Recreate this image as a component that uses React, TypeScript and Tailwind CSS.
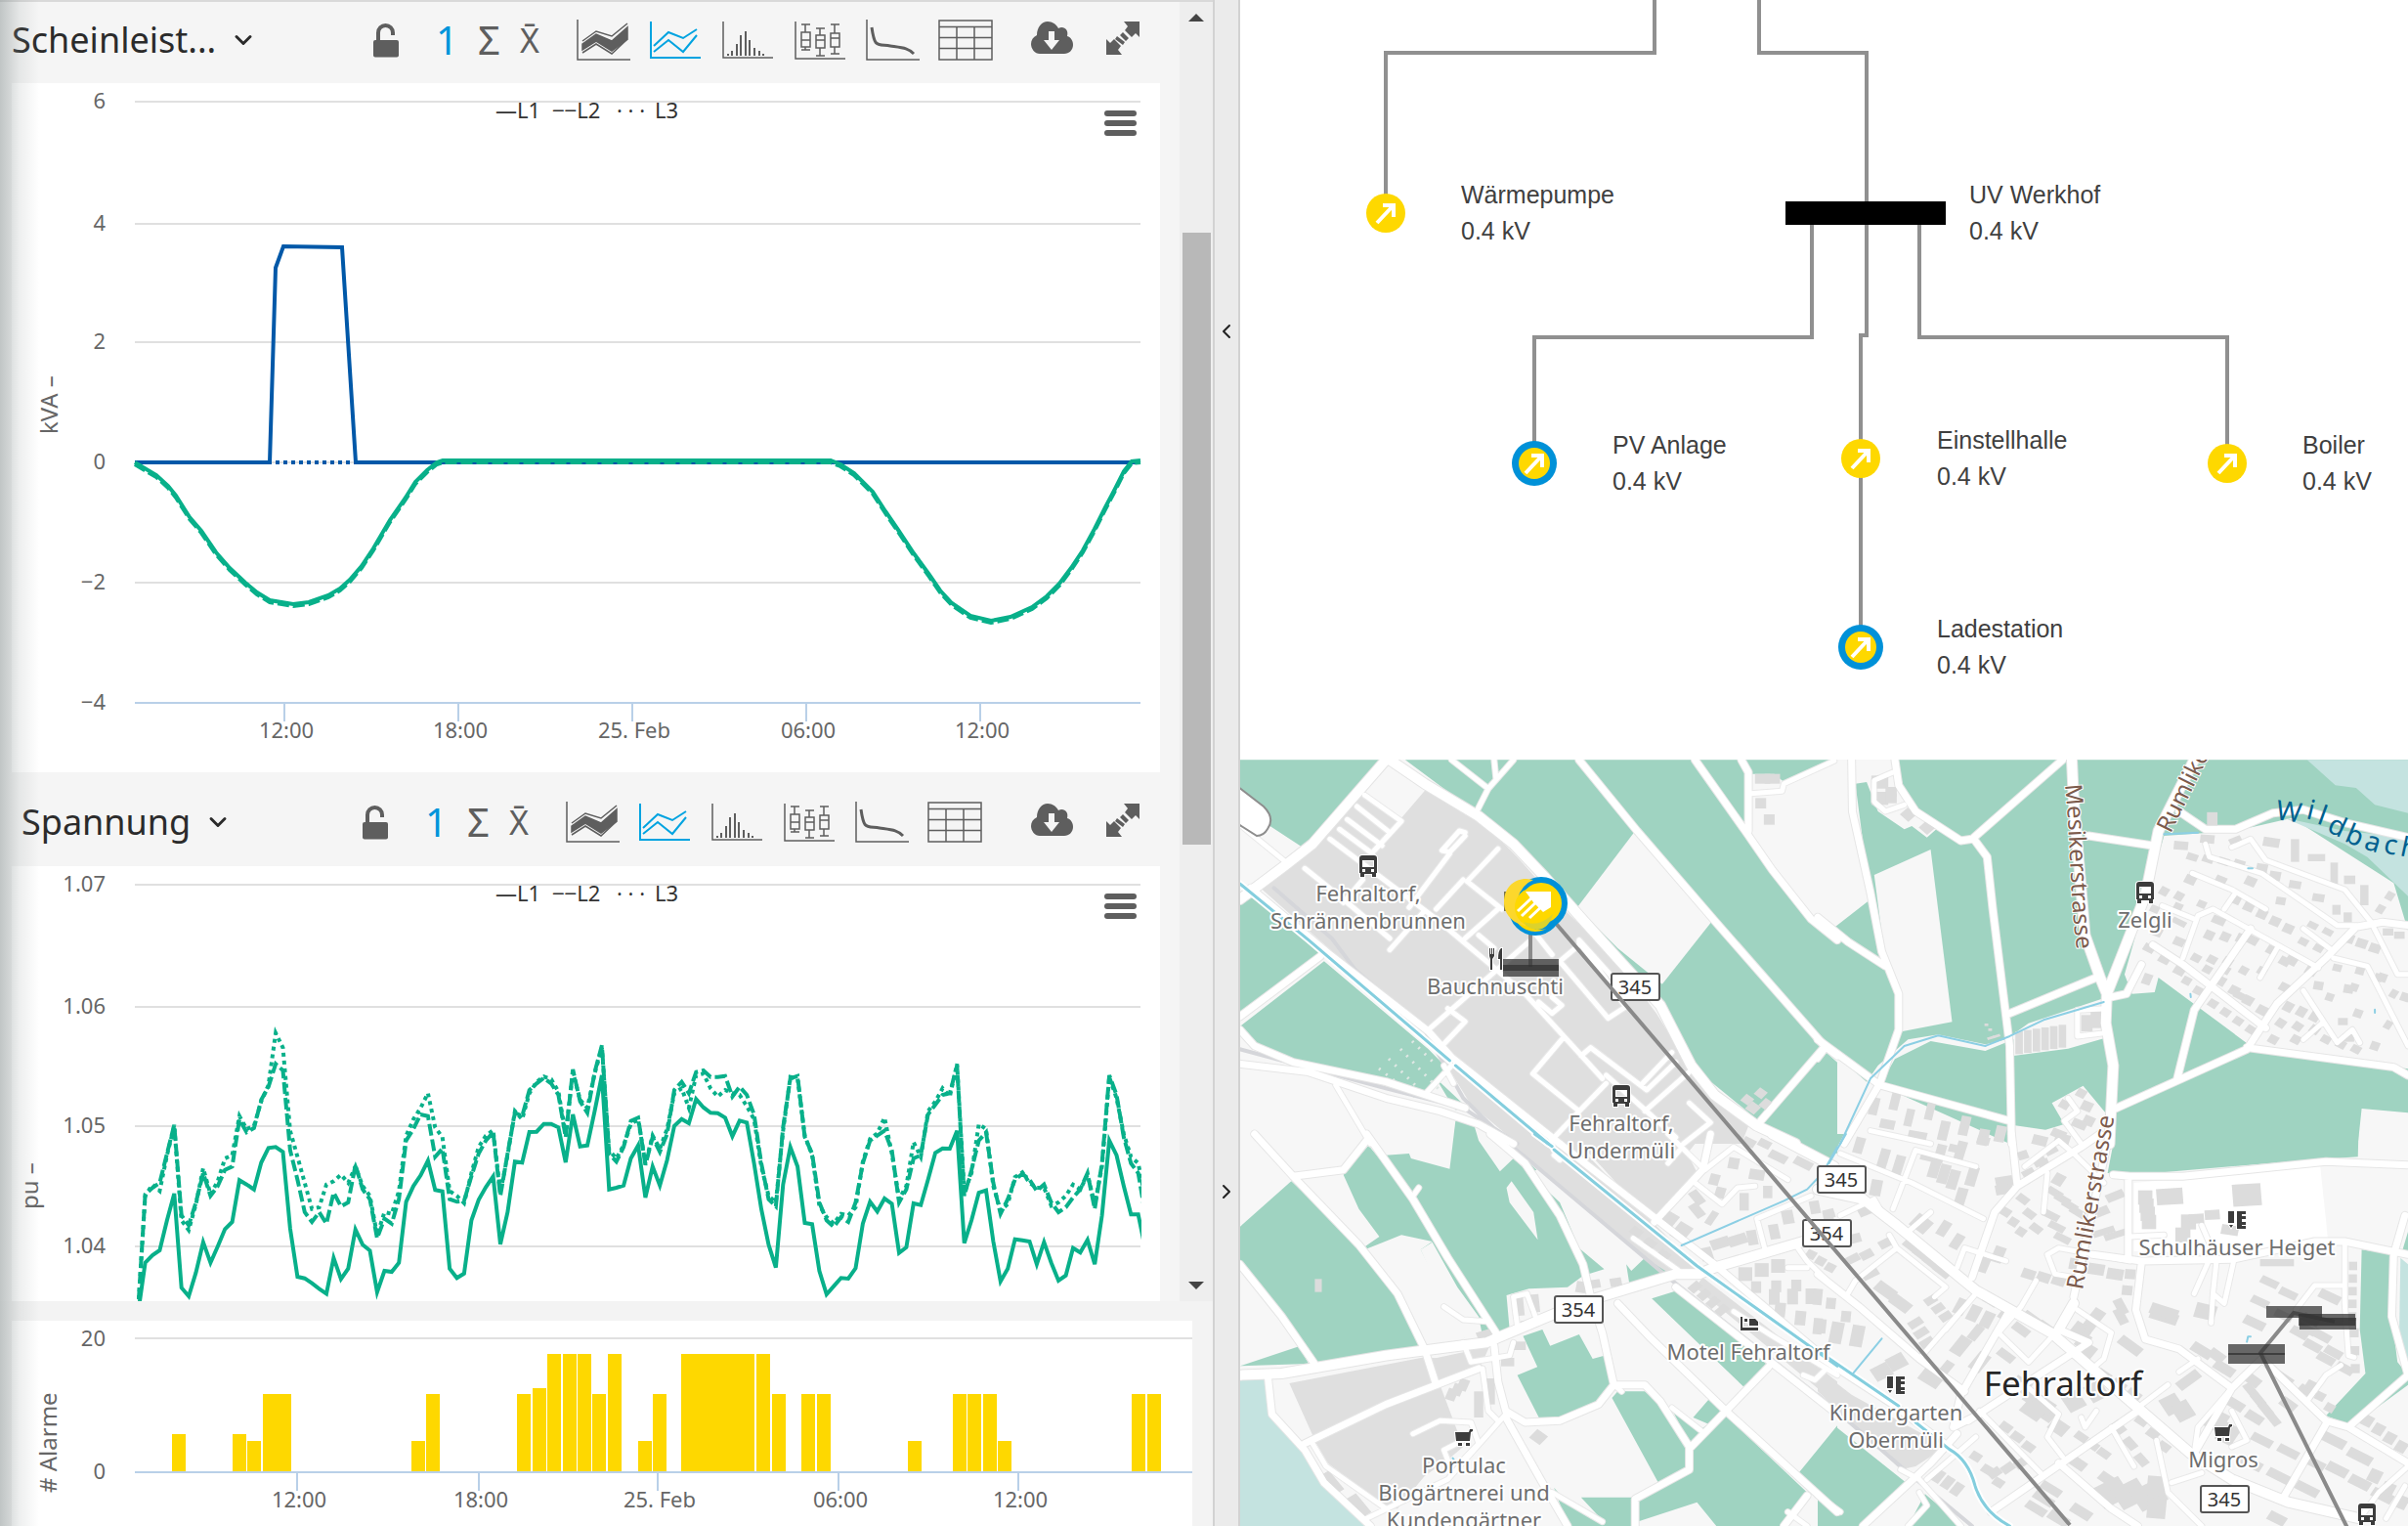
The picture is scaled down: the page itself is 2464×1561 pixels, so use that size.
import type { ReactNode } from 'react';
import { ChevronDown, ChevronLeft, ChevronRight } from 'lucide-react';
import { clsx } from 'clsx';

const GREEN = '#08b08a';
const BLUE = '#0058a8';

const chartText = "font-['Noto_Sans',sans-serif] text-[22px]";
const axisTitle = "font-['Noto_Sans',sans-serif] text-[24px]";

/* ---------- toolbar icons ---------- */

function ChartIcon({ children, active }: { children: ReactNode; active?: boolean }) {
  return (
    <svg
      viewBox="0 0 56 42"
      className={clsx('h-[42px] w-[56px]', active ? 'text-[#00a3e0]' : 'text-[#5e5e5e]')}
      fill="none"
      stroke="currentColor"
      strokeWidth="1.5"
    >
      {children}
    </svg>
  );
}

const histogram = [
  [6, 35], [10, 32], [15, 25], [19, 16], [24, 12], [28, 21], [33, 29], [38, 32], [42, 35],
];

const boxes = [
  { x: 7, top: 13, bottom: 28, median: 21, min: 31, max: 5 },
  { x: 22, top: 16, bottom: 29, median: 21, min: 37, max: 9 },
  { x: 37, top: 14, bottom: 28, median: 19, min: 35, max: 5 },
];

const chartTypes = [
  {
    name: 'Band',
    icon: (
      <ChartIcon>
        <path d="M1 0V41H55" />
        <path d="M6 25L20 15L36 22L52 8V20L36 32L20 22L6 31Z" fill="currentColor" />
        <path d="M6 22L20 12L36 17L52 4M6 34L20 25L36 35L52 20" />
      </ChartIcon>
    ),
  },
  {
    name: 'Linie',
    icon: (
      <ChartIcon active>
        <path d="M2 2V39H53M5 27L20 13L35 19L49 10M5 33L20 21L35 33L49 16" strokeWidth="2" />
      </ChartIcon>
    ),
  },
  {
    name: 'Histogramm',
    icon: (
      <ChartIcon>
        <path d="M2 2V39H53" />
        {histogram.map(([x, y]) => <path key={x} d={`M${x + 1} ${y}V37`} strokeWidth="2" />)}
      </ChartIcon>
    ),
  },
  {
    name: 'Boxplot',
    icon: (
      <ChartIcon>
        <path d="M2 2V40H53" />
        {boxes.map((b) => (
          <path
            key={b.x}
            d={`M${b.x + 1} ${b.top}h9V${b.bottom}h-9ZM${b.x + 1} ${b.median}h9M${b.x + 5} ${b.top}V${b.max}m-4 0h9M${b.x + 5} ${b.bottom}V${b.min}m-4 0h9`}
          />
        ))}
      </ChartIcon>
    ),
  },
  {
    name: 'Dauerlinie',
    icon: (
      <ChartIcon>
        <path d="M1 0V41H55" />
        <path d="M6 8C9 29 11 25 25 27S43 29 49 35" strokeWidth="3" />
      </ChartIcon>
    ),
  },
  {
    name: 'Tabelle',
    icon: (
      <ChartIcon>
        <path d="M1 1H55V41H1ZM1 7.5H55M1 18.5H55M1 29.5H55M19 7V41M37 7V41" />
      </ChartIcon>
    ),
  },
];

function LockIcon() {
  return (
    <svg viewBox="0 0 26 36" className="h-9 w-[26px]">
      <path d="M5 19V10.500a7.500 7.500 0 0 1 15 0V13" fill="none" stroke="#5e5e5e" strokeWidth="4" />
      <rect x="0" y="18" width="26" height="17.500" rx="2" fill="#5e5e5e" />
    </svg>
  );
}

function CloudIcon() {
  return (
    <svg viewBox="0 0 44 34" className="h-[34px] w-11">
      <path
        d="M9 33C4 33 0 28 0 23C0 19 2 16 6 14C6 6 11 0 17 0C22 0 26 3 28 7C33 4 39 8 37 15C41 16 43 20 43 24C43 29 39 33 34 33Z"
        fill="#5e5e5e"
      />
      <path d="M18 10h6v9h5l-8 10l-8-10h5Z" fill="#f5f5f5" />
    </svg>
  );
}

function ExpandIcon() {
  return (
    <svg viewBox="0 0 36 36" className="h-9 w-9" fill="#5e5e5e">
      <path d="M19 1H35V17L31 13L27 17L20 10L23 6Z" />
      <path d="M1 19L5 23L9 19L16 26L13 30L17 35H1Z" />
      <path d="M18 12L24 18L21 21L15 15ZM12 16L20 22L18 25L10 19Z" />
    </svg>
  );
}

interface ToolbarProps {
  title: string;
  id: string;
  className: string;
  titleClassName: string;
}

function Toolbar({ title, id, className, titleClassName }: ToolbarProps) {
  return (
    <header className={clsx("flex items-center bg-[#f5f5f5] pr-10 pb-[6px] font-['Noto_Sans',sans-serif]", className)}>
      <div className={clsx('flex shrink-0 items-center gap-3', titleClassName)}>
        <label htmlFor={id} className="sr-only">Messgrösse</label>
        <select
          id={id}
          defaultValue={title}
          className="appearance-none field-sizing-content bg-transparent pr-[2px] text-[36px] leading-[54px] text-[#2b2b2b]"
        >
          <option>{title}</option>
        </select>
        <ChevronDown className="h-7 w-7 text-[#2b2b2b]" strokeWidth={2.500} />
      </div>
      <button aria-label="Sperren"><LockIcon /></button>
      <div className="ml-7 flex items-center text-[#5e5e5e]">
        <button className="w-[43px] text-[40px] leading-[44px] text-[#0095db]">1</button>
        <button className="w-[43px] text-[40px] leading-[44px]">Σ</button>
        <button className="w-[40px] text-[34px] leading-[44px]">X̄</button>
      </div>
      <div className="ml-7 flex items-center gap-[18px]">
        {chartTypes.map((type) => (
          <button key={type.name} aria-label={type.name}>{type.icon}</button>
        ))}
      </div>
      <div className="ml-auto flex items-center gap-8 pb-1">
        <button aria-label="Herunterladen"><CloudIcon /></button>
        <button aria-label="Vergrössern"><ExpandIcon /></button>
      </div>
    </header>
  );
}

function MenuButton() {
  return (
    <button aria-label="Diagrammmenü" className="absolute top-7 right-6 flex w-[33px] flex-col gap-1">
      <span className="h-[6px] rounded-full bg-[#5e5e5e]" />
      <span className="h-[6px] rounded-full bg-[#5e5e5e]" />
      <span className="h-[6px] rounded-full bg-[#5e5e5e]" />
    </button>
  );
}

/* ---------- charts ---------- */

function Legend({ y }: { y: number }) {
  return (
    <text y={y} fill="#333" className={chartText}>
      <tspan x="507">—L1</tspan>
      <tspan x="565">‒‒L2</tspan>
      <tspan x="631">· · ·</tspan>
      <tspan x="670">L3</tspan>
    </text>
  );
}

const powerLevels = [
  { label: '6', y: 104 },
  { label: '4', y: 229 },
  { label: '2', y: 350 },
  { label: '0', y: 473 },
  { label: '−2', y: 596 },
];

const powerTimes = [
  { label: '12:00', x: 291 },
  { label: '18:00', x: 469 },
  { label: '25. Feb', x: 647 },
  { label: '06:00', x: 825 },
  { label: '12:00', x: 1003 },
];

const pvCurve =
  '138,473 148,479 160,486 172,497 180,507 194,529 206,543 221,565 235,581 251,596 263,606 276,614 300,618 316,616 336,609 348,602 358,593 370,579 382,561 399,532 415,509 425,493 437,481 447,473 453,471 850,471 860,475 874,484 893,503 906,523 919,542 935,566 951,588 962,604 974,617 993,630 1014,635 1034,631 1056,621 1071,610 1084,597 1096,581 1108,563 1120,541 1131,519 1141,500 1150,482 1158,472 1167,471';

const heatPumpCurve = '138,473 276,473 282,274 290,252 350,253 364,473 1167,473';

function PowerChart() {
  return (
    <svg viewBox="12 85 1175 705" className="block h-auto w-full">
      {powerLevels.map(({ label, y }) => (
        <g key={label}>
          <path d={`M138 ${y}H1167`} stroke="#e0e0e0" strokeWidth="2" />
          <text x="108" y={y + 7} textAnchor="end" fill="#666" className={chartText}>{label}</text>
        </g>
      ))}
      <text x="108" y="726" textAnchor="end" fill="#666" className={chartText}>−4</text>
      <path d="M138 719H1167" stroke="#b9d0e8" strokeWidth="2" />
      {powerTimes.map(({ label, x }) => (
        <g key={x}>
          <path d={`M${x} 719v19`} stroke="#b9d0e8" strokeWidth="2" />
          <text x={x + 2} y="755" textAnchor="middle" fill="#666" className={chartText}>{label}</text>
        </g>
      ))}
      <text transform="translate(59 444) rotate(-90)" fill="#666" className={axisTitle}>kVA –</text>
      <path d="M138 473H1167" stroke={BLUE} strokeWidth="4" strokeDasharray="4 4" />
      <polyline points={heatPumpCurve} fill="none" stroke={BLUE} strokeWidth="4" />
      <polyline points={pvCurve} fill="none" stroke={GREEN} strokeWidth="4" strokeDasharray="12 4" transform="translate(0 2)" />
      <polyline points={pvCurve} fill="none" stroke={GREEN} strokeWidth="4" />
      <Legend y={121} />
    </svg>
  );
}

// Quarter-hour samples, three counts per pixel, larger means lower voltage
const l1 = [
  785, 762, 747, 655, 573, 862, 888, 815, 722, 785, 735, 682, 660, 532, 545, 560, 478, 433, 430, 445,
  680, 828, 833, 848, 865, 880, 770, 835, 803, 683, 730, 748, 875, 810, 813, 785, 598, 550, 517, 472,
  562, 566, 803, 832, 818, 655, 592, 553, 520, 728, 630, 475, 478, 384, 383, 359, 359, 370, 477, 330,
  428, 425, 320, 210, 560, 555, 548, 465, 425, 585, 490, 548, 470, 365, 344, 357, 283, 308, 325, 326,
  340, 397, 349, 355, 480, 620, 730, 800, 545, 430, 490, 663, 667, 810, 882, 857, 832, 834, 802, 665,
  598, 628, 588, 604, 755, 738, 603, 608, 530, 448, 434, 435, 380, 725, 655, 570, 563, 720, 842, 803,
  713, 716, 720, 790, 722, 785, 840, 824, 740, 754, 715, 790, 640, 410, 455, 550, 637, 637, 745,
];

const l2 = [
  575, 555, 540, 450, 362, 640, 670, 600, 510, 580, 550, 500, 490, 345, 385, 372, 285, 245, 175, 195,
  440, 530, 630, 660, 630, 665, 570, 612, 600, 485, 560, 590, 710, 650, 665, 590, 410, 375, 330, 335,
  460, 435, 590, 598, 595, 520, 450, 410, 385, 580, 450, 325, 335, 255, 235, 218, 235, 270, 400, 192,
  290, 325, 200, 118, 450, 475, 430, 350, 340, 485, 400, 445, 390, 255, 230, 265, 200, 195, 215, 215,
  212, 275, 245, 270, 330, 480, 590, 612, 370, 220, 212, 400, 450, 600, 655, 675, 645, 660, 600, 480,
  410, 395, 380, 440, 600, 560, 465, 455, 330, 300, 270, 265, 180, 580, 500, 410, 385, 540, 635, 590,
  530, 512, 530, 565, 545, 600, 630, 615, 585, 560, 510, 620, 480, 210, 270, 400, 480, 510, 640,
];

const l3 = [
  580, 545, 565, 455, 365, 655, 685, 605, 495, 575, 535, 465, 455, 335, 375, 365, 290, 240, 80, 125,
  380, 460, 540, 620, 615, 545, 535, 515, 540, 490, 550, 580, 700, 630, 635, 565, 395, 345, 310, 265,
  370, 400, 565, 580, 602, 510, 430, 395, 378, 570, 455, 320, 345, 265, 230, 214, 222, 260, 390, 200,
  285, 310, 205, 125, 440, 465, 425, 360, 345, 480, 395, 435, 375, 265, 250, 310, 210, 205, 250, 275,
  255, 265, 270, 305, 345, 490, 580, 600, 380, 215, 220, 395, 455, 610, 645, 665, 635, 640, 615, 475,
  405, 388, 340, 450, 590, 550, 415, 460, 320, 290, 250, 275, 175, 570, 510, 360, 375, 550, 625, 605,
  522, 508, 540, 555, 555, 610, 600, 580, 545, 560, 515, 605, 490, 215, 280, 390, 460, 480, 590,
];

const toPoints = (samples: number[]) =>
  ['141,1345', ...samples.map((s, i) => `${(148.600 + i * 7.417).toFixed(1)},${(1030 + s / 3).toFixed(1)}`)].join(' ');

const voltageLevels = [
  { label: '1.07', y: 905 },
  { label: '1.06', y: 1030 },
  { label: '1.05', y: 1152 },
  { label: '1.04', y: 1275 },
];

function VoltageChart() {
  return (
    <svg viewBox="12 886 1175 705" className="block h-auto w-full">
      <clipPath id="voltage-plot"><rect x="138" y="905" width="1030" height="615" /></clipPath>
      {voltageLevels.map(({ label, y }) => (
        <g key={label}>
          <path d={`M138 ${y}H1167`} stroke="#e0e0e0" strokeWidth="2" />
          <text x="108" y={y + 7} textAnchor="end" fill="#666" className={chartText}>{label}</text>
        </g>
      ))}
      <text transform="translate(39 1237) rotate(-90)" fill="#666" className={axisTitle}>pu –</text>
      <g clipPath="url(#voltage-plot)" fill="none" stroke={GREEN} strokeWidth="4">
        <polyline points={toPoints(l1)} />
        <polyline points={toPoints(l2)} strokeDasharray="12 4" />
        <polyline points={toPoints(l3)} strokeDasharray="4 4" />
      </g>
      <Legend y={922} />
    </svg>
  );
}

const alarmBars = [
  { x: 176, w: 14, y: 1467 }, { x: 238, w: 14, y: 1467 }, { x: 253, w: 14, y: 1474 }, { x: 269, w: 29, y: 1426 },
  { x: 421, w: 14, y: 1474 }, { x: 436, w: 14, y: 1426 }, { x: 529, w: 14, y: 1426 }, { x: 545, w: 14, y: 1420 },
  { x: 560, w: 14, y: 1385 }, { x: 576, w: 14, y: 1385 }, { x: 591, w: 14, y: 1385 }, { x: 606, w: 14, y: 1426 },
  { x: 622, w: 14, y: 1385 }, { x: 653, w: 14, y: 1474 }, { x: 668, w: 14, y: 1426 }, { x: 697, w: 75, y: 1385 },
  { x: 774, w: 14, y: 1385 }, { x: 790, w: 14, y: 1426 }, { x: 820, w: 14, y: 1426 }, { x: 836, w: 14, y: 1426 },
  { x: 929, w: 14, y: 1474 }, { x: 975, w: 14, y: 1426 }, { x: 990, w: 14, y: 1426 }, { x: 1006, w: 14, y: 1426 },
  { x: 1021, w: 14, y: 1474 }, { x: 1158, w: 14, y: 1426 }, { x: 1174, w: 14, y: 1426 },
];

const alarmTimes = [
  { label: '12:00', x: 304 },
  { label: '18:00', x: 490 },
  { label: '25. Feb', x: 673 },
  { label: '06:00', x: 858 },
  { label: '12:00', x: 1042 },
];

function AlarmChart() {
  return (
    <svg viewBox="12 1351 1208 210" className="block h-auto w-full">
      <path d="M138 1369H1220" stroke="#e0e0e0" strokeWidth="2" />
      <text x="108" y="1377" textAnchor="end" fill="#666" className={chartText}>20</text>
      <text x="108" y="1513" textAnchor="end" fill="#666" className={chartText}>0</text>
      {alarmBars.map((bar) => (
        <rect key={bar.x} x={bar.x} y={bar.y} width={bar.w} height={1506 - bar.y} fill="#fed800" />
      ))}
      <path d="M138 1506H1220" stroke="#b9d0e8" strokeWidth="2" />
      {alarmTimes.map(({ label, x }) => (
        <g key={x}>
          <path d={`M${x} 1506v19`} stroke="#b9d0e8" strokeWidth="2" />
          <text x={x + 2} y="1542" textAnchor="middle" fill="#666" className={chartText}>{label}</text>
        </g>
      ))}
      <text transform="translate(58 1527) rotate(-90)" fill="#666" className={axisTitle}># Alarme</text>
    </svg>
  );
}

/* ---------- network diagram ---------- */

const gridNodes = [
  { name: 'Wärmepumpe', x: 149, y: 218, textX: 226, textY: 208, ring: false },
  { name: 'PV Anlage', x: 301, y: 474, textX: 381, textY: 464, ring: true },
  { name: 'Einstellhalle', x: 635, y: 469, textX: 713, textY: 459, ring: false },
  { name: 'Boiler', x: 1010, y: 474, textX: 1087, textY: 464, ring: false },
  { name: 'Ladestation', x: 635, y: 662, textX: 713, textY: 652, ring: true },
];

const nodeText = "font-['Liberation_Sans',Arial,sans-serif] text-[25px]";

function NetworkDiagram() {
  return (
    <svg viewBox="0 0 1195 777" className="block h-auto w-full bg-white">
      <path
        d="M424 0V54H149V200M531 0V54H641V206M585 228V345H301V455M641 228V343H635V645M695 228V345H1010V455"
        fill="none"
        stroke="#909090"
        strokeWidth="4"
      />
      <rect x="558" y="206" width="164" height="24" />
      {gridNodes.map((node) => (
        <g key={node.name}>
          {node.ring && <circle cx={node.x} cy={node.y} r="23" fill="#0091d8" />}
          <circle cx={node.x} cy={node.y} r={node.ring ? 16 : 20} fill="#fed800" />
          <path
            transform={`translate(${node.x} ${node.y})`}
            d="M-9 10L7 -7M-3 -8H8V4"
            fill="none"
            stroke="#fff"
            strokeWidth="4"
          />
          <text x={node.textX} y={node.textY} fill="#404040" className={nodeText}>{node.name}</text>
          <text x={node.textX} y={node.textY + 37} fill="#404040" className={nodeText}>0.4 kV</text>
        </g>
      ))}
      <text x="746" y="208" fill="#404040" className={nodeText}>UV Werkhof</text>
      <text x="746" y="245" fill="#404040" className={nodeText}>0.4 kV</text>
    </svg>
  );
}

/* ---------- map ---------- */

interface Tile {
  id: string;
  transform: string;
  green: string;
  light?: string;
  grey: string;
  water: string;
  major: string;
  mid: string;
  minor: string;
  rail: string;
  river: string;
  stream: string;
  // x1, y1, x2, y2, count, width, height, angle
  houses: number[][];
}

const tiles: Tile[] = [
  {
    id: 'nw',
    transform: 'translate(-9 -7) scale(.3954 .3333)',
    green:
      'M22 22H400L190 295L100 225L22 180ZM450 22H1190L1340 250L1500 515L1568 580V940L1530 905L1365 1130L1200 970L1110 760L900 490L810 380L730 280L640 190ZM1210 22H1310L1335 80V240ZM1330 22H1550L1430 90L1405 65H1345ZM22 465L60 440L235 620L22 800ZM22 840L240 640L510 910L560 970L500 1050L400 1010L160 950L60 900ZM1365 1140L1530 910L1568 950V1230H1480ZM580 1140L620 1160L640 1200H575ZM600 1090L560 1060L530 1000L620 1100Z',
    light: 'M1045 240L1245 515L1115 710L1000 600L895 475Z',
    grey:
      'M75 415L200 310L345 120L440 200L505 110L640 200L740 320L860 480L1000 640L1100 800L1190 970L1340 1140L1320 1200H740L620 1080L510 870Z',
    water: '',
    major: 'M410 22L500 95L640 195L730 280L810 380L900 500L1010 645L1110 775L1190 960L1250 1050L1360 1145L1460 1200M22 450L140 345L210 280L400 22',
    mid: 'M900 22L1050 240L1250 515L1535 900L1568 930M1200 22L1330 240L1400 360L1500 510L1568 575M50 415L250 615L510 855L570 935L850 1200M22 810L230 625M1530 910L1370 1130M22 850L60 900L160 950L400 1010L605 1090M22 955L200 980L400 1060L540 1100L640 1140L730 1200M1338 240V60L1320 22',
    minor:
      'M570 22L665 110M680 22L685 80M730 22L665 110L635 180M1345 125L1425 118L1430 95L1560 25M22 220L140 335M345 130L440 210L370 300M325 165L410 245M300 205L390 285M280 235L365 310M255 265L530 510L760 740L960 1000M190 355L290 450L410 570M605 245L590 240L545 300L565 305L605 255M565 310L460 475M340 390L290 460M690 295L610 395L700 480M600 390L530 480M410 605L500 485M690 480L605 570M770 580L510 850M545 900L605 825L560 785M640 560L680 600M790 560L830 620M900 575L1010 720M850 640L975 815L1020 780L900 580M850 640L900 590M795 765L830 800L855 775L830 750M855 880L780 985L900 1100L970 1015M905 930L930 905L1075 1035L1150 950M1060 1020L1140 920M1190 975L1070 1100M970 990L1150 1180M1185 1075L1240 1135L1170 1200M900 1100L820 1200M570 960L500 1050M550 960L575 1015M270 1020L360 1200',
    rail: 'M22 910L180 960L400 1030L600 1090L740 1200M110 415L260 570L320 665L500 850L600 1060L720 1200',
    river: 'M22 402L200 575L565 945M580 960L820 1200',
    stream: '',
    houses: [
      [1375, 80, 1400, 80, 2, 40, 30, 0], [1370, 155, 1392, 205, 2, 28, 32, 0],
      [1335, 1065, 1370, 1045, 2, 26, 26, 40], [1350, 1090, 1385, 1080, 2, 30, 30, 40],
    ],
  },
  {
    id: 'ne',
    transform: 'translate(591 -7) scale(.3852 .3333)',
    green:
      'M210 22H1568V545L1530 400L1260 200L1110 240L920 255L815 680L835 740L895 735L905 690L1150 900L1568 970V1105L1445 1092L1435 1200H790L775 1120L705 1022L622 1075L655 1140L605 1157L520 1143V1200H510L165 1020L205 940L300 885L445 915L520 880V930L665 908L780 870L755 755L560 830L500 880L445 895L320 865L240 880L160 960L130 1010L0 880V515L40 540L140 450L100 95L130 90L160 180L230 235L250 225L290 260L315 235L240 165Z',
    light: 'M150 375L300 297L357 826L222 856L215 720L180 640Z',
    grey: '',
    water: 'M1300 22L1375 100L1430 108L1480 160L1568 185V22ZM1240 200L1400 280L1460 320L1568 440V260L1400 240Z',
    major: 'M675 22L680 150L710 560L750 690L768 740M1000 22L905 240L870 440L768 740L765 830L785 960L775 1200',
    mid: 'M90 22L92 180L140 430L170 610L215 740L215 850L165 1015L70 1200M205 22L215 100L260 180L380 270L410 265L650 22M415 265L450 320L465 480L510 900L515 1200M0 505L80 580L180 655M0 880L165 1020L510 1130M510 800L740 690M785 1095L1140 910L1220 770L1350 630L1430 535L1500 520L1568 530M1140 905L1530 965L1568 990M720 255L890 285M960 180L1030 235L1110 235L1210 185L1290 175L1400 215L1568 260M780 750L820 740L860 650M1190 845L970 650L890 590M955 1000L1000 790L1150 540',
    minor:
      'M200 60L150 85L150 150L180 180L230 160M690 790V870L765 860M690 790L765 785M1100 290L1150 265L1190 330L1400 420L1470 520L1540 680L1568 680M995 370L1100 420L1190 480M1030 280L1040 320L1180 370L1280 450L1380 530L1430 530M1080 480L1110 430M970 630L1010 500L1050 480L1330 660M915 470L1000 510M1290 540L1370 610M1370 630L1460 655L1568 900M1175 690L1220 600M1290 730L1380 890L1420 850L1440 890M1290 880L1340 830M140 1160L300 1200M665 1060L690 1100L655 1130L700 1200M0 940L20 910',
    rail: '',
    river: '',
    stream: 'M60 1200L140 1000L230 900L320 868L445 900L510 870L600 820L760 765M920 250L1010 245M1143 355L1155 355M990 740L991 750M1480 788V798',
    houses: [
      [165, 90, 165, 140, 2, 45, 40, 0], [195, 120, 195, 140, 2, 30, 30, 0], [240, 190, 290, 230, 2, 32, 30, 45],
      [1048, 205, 1048, 205, 1, 28, 45, 0], [965, 285, 1035, 265, 2, 38, 26, 5], [995, 320, 1120, 340, 4, 30, 22, 20],
      [1110, 270, 1110, 270, 1, 34, 22, -25], [1205, 275, 1205, 275, 1, 44, 28, 10], [1268, 300, 1268, 300, 1, 22, 70, 0],
      [1325, 322, 1325, 322, 1, 46, 22, 0], [1372, 370, 1372, 370, 1, 20, 66, 0], [1413, 390, 1413, 390, 1, 30, 26, 0],
      [1452, 437, 1452, 437, 1, 22, 62, 0], [1180, 355, 1215, 378, 2, 30, 28, 10], [1268, 405, 1330, 445, 2, 32, 24, 10],
      [1378, 482, 1408, 505, 2, 22, 30, 0], [990, 390, 1150, 395, 3, 30, 28, 25], [920, 425, 960, 440, 2, 24, 26, 30],
      [895, 480, 1020, 465, 3, 24, 22, 25], [1110, 450, 1250, 540, 5, 28, 28, 25], [1230, 455, 1230, 455, 1, 26, 24, 10],
      [960, 520, 960, 520, 1, 40, 18, 30], [900, 550, 960, 580, 2, 30, 26, 25], [1065, 515, 1065, 515, 1, 36, 24, 25],
      [1040, 560, 1125, 570, 3, 26, 28, 25], [1005, 630, 1090, 640, 3, 26, 24, 30], [880, 600, 960, 670, 3, 30, 24, 30],
      [1035, 665, 1180, 670, 4, 24, 24, 30], [1155, 575, 1310, 670, 4, 30, 26, 30], [1240, 640, 1240, 720, 2, 28, 26, 30],
      [1070, 700, 1180, 790, 4, 28, 28, 30], [980, 700, 1010, 730, 2, 24, 24, 30], [1050, 770, 1150, 850, 4, 26, 24, 35],
      [1120, 745, 1120, 745, 1, 30, 22, 30], [1315, 530, 1355, 550, 2, 28, 20, 30], [1290, 580, 1330, 600, 2, 26, 22, 30],
      [1410, 570, 1480, 600, 3, 30, 28, 20], [1520, 440, 1495, 480, 2, 22, 26, 30], [1515, 550, 1545, 560, 2, 28, 22, 0],
      [1380, 660, 1440, 670, 2, 24, 22, 15], [1330, 715, 1410, 725, 2, 26, 26, 10], [1360, 750, 1490, 690, 3, 22, 24, 20],
      [1250, 780, 1320, 810, 3, 26, 30, 30], [1230, 830, 1320, 850, 3, 26, 26, 35], [1210, 880, 1270, 880, 2, 26, 26, 30],
      [1395, 825, 1395, 825, 1, 26, 22, 0], [1350, 880, 1430, 910, 3, 26, 24, 30], [1480, 900, 1435, 800, 2, 24, 26, 20],
      [1515, 835, 1530, 740, 2, 20, 26, 30], [1500, 690, 1560, 750, 2, 24, 26, 20], [1410, 875, 1410, 875, 1, 30, 24, 0],
      [535, 890, 650, 870, 6, 20, 70, 0], [715, 830, 740, 820, 2, 30, 50, 0], [875, 695, 875, 695, 1, 24, 34, 20],
      [150, 1085, 205, 1070, 2, 24, 54, 12], [185, 1140, 185, 1140, 1, 40, 28, 12], [243, 1120, 298, 1100, 2, 22, 54, 12],
      [265, 1175, 265, 1175, 1, 50, 26, 12], [335, 1160, 390, 1145, 2, 26, 60, 12], [440, 1180, 485, 1170, 2, 28, 50, 12],
      [655, 1080, 700, 1045, 2, 26, 26, 30], [715, 1085, 720, 1130, 2, 30, 30, 25], [695, 1140, 640, 1170, 2, 40, 26, 25],
      [460, 875, 475, 870, 2, 20, 8, -20], [448, 835, 458, 850, 2, 10, 8, 0],
    ],
  },
  {
    id: 'sw',
    transform: 'translate(-9 383) scale(.3954 .3333)',
    green:
      'M22 285L155 145L330 340L420 470L500 655L220 700L22 390ZM22 712L175 652L200 705ZM290 125L355 35L470 200L690 610L660 650L610 640L490 355L520 330L440 310L345 355L315 320L340 350L383 315L330 230ZM580 -40H625L640 20L695 115L730 75L850 210L900 350L965 415L910 435L870 470L770 475L712 495L720 600L690 610L540 340L470 190L400 65L460 60L465 75L565 107ZM1022 400L1035 420L1070 380L1150 440L1032 475ZM1088 505L1155 480L1390 710L1325 775L1180 610ZM755 620L805 600L825 650L900 615L935 690L965 680L990 780L960 830L880 870L800 880L740 740L792 715ZM985 810L1000 790H1070L1110 830L1180 960V1030L1105 1070ZM1140 845L1210 910L1235 890L1195 870L1235 815L1490 1100L1440 1203H1255L1205 1130L1050 1190V1110L1180 1030L1190 960ZM1465 1045L1568 895V1150L1490 1090ZM835 1085L860 1120L960 1185L905 1115H1040V1203H870ZM1480 0H1568V60L1530 60ZM745 60L790 110L770 120Z',
    light: 'M712 165L725 145L782 240L793 325L720 210ZM490 355L520 332L585 470L640 560L655 650H615L560 540Z',
    grey:
      'M700 0H880L1090 270L1210 130L1180 60L1220 0H870L1030 200L1200 400L1210 440L1130 440L860 170ZM150 765L500 685L640 700L660 720L540 770L600 960L560 1000L500 1050L430 1150H400L250 1010L220 950ZM520 690L600 670L680 620L650 700L540 750ZM1220 440L1568 760V830L1200 470Z',
    water: 'M22 750H95L105 870L190 970L240 1070L360 1203H22Z',
    major: 'M22 740L130 735L400 680L560 655L660 640L740 600L900 520L1150 430L1210 430L1250 410L1480 330M1400 0L1560 100',
    mid: 'M60 0L160 130L330 340L430 490L500 660L530 770M350 0L470 200L560 380L690 620M22 400L130 560L215 705M160 130L290 110L350 20M670 0L760 90L850 250L910 400L930 500L960 610L990 770L950 830L850 880L760 885L710 850L690 760L680 650M95 750L105 860L190 970L240 1070L360 1203M190 950L400 830L640 720M990 770H1070L1110 820L1185 960V1030L1045 1120V1203M1000 520L1080 620L1280 850L1568 1160M1390 715L1280 850L1190 960M1150 470L1568 860M850 30L1250 400L1568 720M1095 270L1220 110L1240 0M710 870L800 1060L870 1203M1490 1110L1430 1203',
    minor:
      'M470 190L485 165M600 640L620 700L720 680L730 640M650 720L665 850L690 880M470 920L540 880L620 885L640 950L600 1000M550 530L600 570L660 575M730 500L740 590M730 500L765 490L790 570M710 860L560 1060L350 1180M210 950L245 1020L400 1150M560 1000L550 970L600 940M1040 320L1170 430M1130 90L1160 50M1130 0L1225 110L1300 40L1440 140M1200 150L1270 215L1310 165L1355 160M1380 350L1360 260L1500 190M1460 340L1490 390L1568 480M1480 740L1510 755L1540 720M1300 545L1400 620L1568 740M1440 410H1490M1440 1160L1490 1203M835 65L850 80M830 1100L960 1190M990 770L1010 790M1140 840L1215 910',
    rail: 'M690 0L860 170L1130 440L1568 850',
    river: 'M785 0L830 38M835 48L1205 405L1568 712',
    stream: 'M1165 342L1430 205L1490 170L1530 120L1568 40M573 995L576 1000',
    houses: [
      [225, 465, 225, 465, 1, 18, 40, 0], [1300, 90, 1300, 90, 1, 28, 34, 10], [1250, 140, 1265, 180, 2, 26, 34, 15],
      [1360, 125, 1360, 125, 1, 40, 32, 10], [1388, 178, 1388, 178, 1, 24, 38, 0], [1327, 208, 1327, 208, 1, 24, 54, 0],
      [1205, 195, 1205, 235, 2, 26, 46, -35], [1130, 265, 1165, 300, 2, 40, 52, 35], [1243, 258, 1243, 258, 1, 20, 44, 30],
      [1048, 300, 1120, 370, 3, 32, 24, 40], [1230, 368, 1230, 368, 1, 30, 40, -15], [1265, 335, 1310, 325, 2, 50, 32, -20],
      [1348, 318, 1405, 300, 2, 26, 46, -10], [1440, 255, 1440, 255, 1, 30, 42, -10], [1510, 225, 1545, 255, 2, 26, 40, -10],
      [1330, 430, 1415, 405, 3, 36, 42, 0], [1358, 470, 1462, 465, 3, 26, 36, 0], [1405, 500, 1500, 498, 3, 28, 48, 0],
      [1420, 540, 1525, 590, 3, 28, 44, 5], [1500, 370, 1550, 410, 3, 26, 26, 30], [1200, 470, 1270, 540, 4, 24, 34, 45],
      [995, 455, 940, 460, 2, 30, 26, -10], [905, 470, 905, 470, 1, 26, 34, 10], [745, 530, 785, 520, 2, 24, 55, -5],
      [655, 615, 655, 615, 1, 40, 24, -20], [715, 700, 745, 650, 2, 34, 26, 0], [640, 830, 670, 790, 2, 24, 80, 0],
      [570, 800, 600, 770, 3, 26, 36, 20], [795, 930, 795, 930, 1, 36, 34, 40], [1340, 25, 1380, 30, 2, 34, 24, 30],
      [1415, 70, 1480, 90, 2, 50, 26, 30], [260, 1070, 330, 1140, 2, 30, 70, -35], [762, 577, 762, 577, 1, 26, 10, -10],
    ],
  },
  {
    id: 'se',
    transform: 'translate(591 383) scale(.3852 .3333)',
    green:
      'M0 0H70L30 90L0 75ZM795 -30H1437L1435 70L1300 80L840 125L770 120ZM1445 355L1530 370L1525 560L1540 700L1568 740V770L1420 895L1350 865L1455 735L1440 600ZM1550 370L1568 300V375ZM50 900L235 1070L120 1203H0V980ZM285 1105L385 1203H240ZM0 80L20 90Z',
    grey: 'M0 720L90 800L340 960L260 1020L220 1030L0 790Z',
    water: 'M1548 380L1568 400V720L1545 600Z',
    major: 'M0 170L120 200L210 280L420 480L620 610L840 830L990 980L1100 1060L1250 1130L1440 1180M680 520L640 600',
    mid: 'M775 0L680 500M785 125L830 130L970 130L1350 85L1568 95M825 140V380M730 370L860 390L1100 385L1320 330L1400 330L1568 370M860 395L845 540L870 630L960 660L1100 780L1000 980M1560 250L1530 370L1525 560L1568 740M1568 740L1410 900L1350 880L1180 690L1100 780M0 430L110 530L270 690L390 790M0 680L200 830L370 980M510 540L380 800L360 900L430 860M120 1203L300 1010L370 920M515 0L530 160L470 240L410 440M530 160L700 40L750 0M640 600L720 640L400 880M850 850L460 1160M640 1010L780 1150L850 1203M1350 890L1240 1110M1410 900L1568 1010',
    minor:
      'M60 60L250 150L440 260M260 50L200 230M260 50L420 100M60 250L150 200L180 260L240 300L300 240M680 60L760 150M550 100L640 20L680 60M610 120L600 240M610 370L640 350L830 390M610 370L630 430L680 440M830 315L920 310M1020 280L1050 360L1000 490M1060 380L1050 490L1080 520L1105 390M1050 490L1045 580M190 310L210 350L100 450L80 490M210 350L340 470L310 500M370 410L390 350L500 390M340 600L420 490L270 690M580 450L540 530L480 610L560 700L640 600M690 540L780 610L760 690L730 720M1400 340V520L1410 680L1425 685M1390 465H1320L1270 540M960 730L1010 690M1390 710L1350 740L1300 820M430 850L600 1050M560 780L640 860L610 930L650 990M700 870L710 900L740 850M850 840L930 770M1000 980L1010 900L1100 780M900 940L930 1100L1020 1203M1100 850L1140 940L1100 960M780 900L840 1020M270 1100L290 1140L240 1203M220 1030L270 1060L380 1203M940 1070L1020 1040M0 1110L60 1160M420 930L350 1000L290 1060M1440 1180L1490 1100L1568 1020M1510 1180L1560 1080',
    rail: 'M0 800L230 1030L410 1203',
    river: 'M0 665L215 835M260 885L350 968Q400 1000 418 1080Q440 1160 510 1203',
    stream: 'M170 628L95 733M75 0L30 90M1140 638L1143 622H1150',
    houses: [
      [110, 35, 110, 35, 1, 26, 50, 15], [175, 75, 215, 95, 2, 26, 60, 15], [325, 60, 380, 50, 2, 26, 56, 15],
      [310, 105, 360, 140, 3, 28, 60, 15], [290, 70, 440, 20, 3, 34, 24, 15], [410, 130, 380, 195, 2, 28, 60, 15],
      [495, 145, 495, 170, 2, 46, 30, -10], [545, 65, 600, 90, 2, 28, 26, -20], [560, 120, 620, 50, 3, 34, 24, -30],
      [590, 20, 650, 15, 2, 40, 30, 15], [545, 200, 580, 290, 3, 34, 24, 40], [500, 240, 540, 300, 3, 26, 26, 35],
      [630, 180, 690, 240, 4, 44, 22, 35], [620, 250, 650, 320, 3, 46, 22, 30], [640, 140, 640, 140, 1, 30, 36, 30],
      [790, 190, 750, 240, 2, 50, 26, -25], [760, 300, 790, 310, 2, 60, 20, -20], [155, 165, 155, 165, 1, 30, 50, 10],
      [130, 230, 130, 230, 1, 50, 36, -25], [30, 245, 100, 320, 2, 30, 28, -15], [275, 275, 275, 275, 1, 50, 46, 40],
      [335, 290, 370, 330, 2, 26, 48, 30], [180, 335, 130, 370, 2, 36, 26, -30], [250, 345, 330, 420, 4, 50, 26, 42],
      [140, 430, 90, 385, 2, 46, 24, -30], [220, 520, 180, 480, 2, 60, 34, 40], [300, 510, 340, 560, 3, 34, 24, -35],
      [260, 580, 290, 640, 3, 40, 24, -35], [440, 400, 480, 370, 2, 30, 50, 20], [380, 530, 450, 570, 3, 30, 50, 25],
      [560, 430, 640, 450, 3, 36, 30, 20], [460, 510, 500, 560, 2, 40, 28, 35], [380, 650, 430, 700, 2, 36, 60, 35],
      [420, 610, 340, 720, 2, 26, 50, 35], [570, 570, 610, 600, 2, 60, 30, 40], [540, 600, 500, 680, 2, 50, 26, 40],
      [690, 400, 790, 430, 3, 44, 34, 10], [830, 430, 822, 480, 2, 28, 30, 5], [805, 530, 805, 560, 2, 26, 50, -25],
      [740, 560, 700, 620, 3, 34, 46, 35], [830, 650, 830, 650, 1, 70, 30, 40], [690, 600, 720, 670, 3, 30, 46, 35],
      [920, 560, 920, 545, 2, 76, 34, 20], [1030, 545, 1030, 545, 1, 56, 46, 15], [1020, 665, 1080, 720, 2, 60, 30, 35],
      [1200, 455, 1250, 490, 2, 50, 24, 28], [1175, 515, 1300, 600, 3, 50, 24, 28], [1160, 580, 1360, 500, 2, 60, 28, 28],
      [1310, 570, 1400, 720, 4, 50, 26, 32], [1280, 610, 1350, 690, 3, 50, 26, 32], [1422, 405, 1420, 560, 5, 22, 26, 0],
      [1425, 610, 1428, 720, 3, 24, 28, 0], [985, 755, 985, 755, 1, 30, 70, 50], [940, 830, 970, 850, 2, 50, 56, -30],
      [1160, 800, 1200, 860, 3, 24, 80, -35], [1060, 680, 1250, 830, 3, 46, 30, 40], [1110, 830, 1160, 870, 2, 50, 28, 35],
      [870, 195, 880, 270, 4, 38, 44, 0], [935, 192, 935, 192, 1, 70, 50, -4], [1140, 187, 1140, 187, 1, 76, 68, -4],
      [985, 270, 970, 310, 2, 40, 46, 0], [1048, 248, 1006, 260, 2, 40, 30, -4], [1095, 295, 1095, 295, 1, 46, 30, 10],
      [1220, 395, 1220, 395, 1, 90, 22, 0], [0, 500, 0, 590, 2, 24, 50, 5], [35, 520, 75, 560, 2, 26, 34, 5],
      [50, 610, 105, 620, 2, 34, 66, 10], [210, 700, 170, 730, 2, 50, 44, -30], [300, 750, 300, 750, 1, 60, 40, 35],
      [540, 770, 640, 900, 4, 50, 40, 38], [600, 830, 570, 850, 2, 60, 40, 38], [680, 820, 740, 790, 2, 50, 56, -30],
      [760, 740, 840, 800, 3, 40, 26, 38], [860, 880, 920, 960, 3, 34, 26, 38], [560, 960, 500, 900, 3, 34, 26, 38],
      [540, 1010, 470, 1040, 3, 36, 26, -38], [700, 930, 760, 980, 3, 36, 24, 38], [800, 900, 860, 1000, 3, 26, 40, -38],
      [690, 1010, 770, 1060, 2, 50, 30, 38], [320, 1050, 370, 1090, 3, 26, 40, 35], [420, 990, 480, 1070, 3, 30, 26, 35],
      [780, 1100, 880, 1110, 3, 80, 70, -30], [900, 1080, 900, 1150, 2, 50, 60, 5], [620, 1090, 580, 1150, 3, 60, 26, 35],
      [700, 1160, 640, 1180, 2, 60, 30, 35], [1180, 940, 1320, 1010, 3, 60, 26, 30], [1150, 1010, 1300, 1090, 3, 66, 28, 30],
      [1370, 940, 1440, 990, 2, 70, 30, 30], [1380, 1030, 1500, 1110, 3, 60, 30, 30], [1460, 880, 1550, 960, 4, 30, 34, 30],
      [1120, 1090, 1220, 1180, 2, 50, 30, 30], [1240, 750, 1300, 790, 2, 50, 24, 38], [1480, 1050, 1550, 1130, 3, 34, 40, 25],
      [1310, 770, 1360, 840, 3, 26, 26, 30], [1090, 920, 1060, 880, 2, 50, 60, 30],
    ],
  },
];

function HouseRow({ row }: { row: number[] }) {
  const [x1, y1, x2, y2, count, w, h, angle] = row;
  return (
    <>
      {Array.from({ length: count }, (_, i) => {
        const t = count > 1 ? i / (count - 1) : 0;
        return (
          <rect
            key={i}
            x={-w / 2}
            y={-h / 2}
            width={w}
            height={h}
            transform={`translate(${x1 + (x2 - x1) * t} ${y1 + (y2 - y1) * t}) rotate(${angle})`}
          />
        );
      })}
    </>
  );
}

type TileLine = 'major' | 'mid' | 'minor' | 'rail' | 'river' | 'stream';

function Lines({ kind, color, width }: { kind: TileLine; color: string; width: number }) {
  return (
    <g fill="none" stroke={color} strokeWidth={width} strokeLinecap="round" strokeLinejoin="round">
      {tiles.map((tile) => (
        <path key={tile.id} d={tile[kind]} transform={tile.transform} vectorEffect="non-scaling-stroke" />
      ))}
    </g>
  );
}

const places = [
  { x: 131, y: 145, text: 'Fehraltorf,' },
  { x: 131, y: 173, text: 'Schrännenbrunnen' },
  { x: 261, y: 240, text: 'Bauchnuschti' },
  { x: 390, y: 380, text: 'Fehraltorf,' },
  { x: 390, y: 408, text: 'Undermüli' },
  { x: 926, y: 172, text: 'Zelgli' },
  { x: 520, y: 614, text: 'Motel Fehraltorf' },
  { x: 671, y: 676, text: 'Kindergarten' },
  { x: 671, y: 704, text: 'Obermüli' },
  { x: 1020, y: 507, text: 'Schulhäuser Heiget' },
  { x: 1006, y: 724, text: 'Migros' },
  { x: 229, y: 730, text: 'Portulac' },
  { x: 229, y: 758, text: 'Biogärtnerei und' },
  { x: 229, y: 786, text: 'Kundengärtner' },
];

const shields = [
  { x: 380, y: 219, text: '345' },
  { x: 322, y: 549, text: '354' },
  { x: 591, y: 416, text: '345' },
  { x: 576, y: 471, text: '354' },
  { x: 983, y: 743, text: '345' },
];

const symbols = {
  bus: 'M-6 -11H6Q9 -11 9 -8V7H8V11H4V8H-4V11H-8V7H-9V-8Q-9 -11 -6 -11ZM-6 -6V1H6V-6ZM-6 3V6H-3V3ZM3 3V6H6V3Z',
  cart: 'M-9 -6H5L6 -9H9V-7L7 -6L6 3H-8ZM-6 5H-2V8H-6ZM2 5H6V8H2Z',
  school: 'M-9 -9H-3V3H-9ZM-8 5H-4L-6 8ZM0 -9H9V-6H5V-4H9V-1H5V2H9V5H5V6H9V9H0Z',
  bed: 'M-9 -7H-7V4H9V7H-9ZM-5 -5H-2V-2H-5ZM0 -5H6L9 -2V2H0Z',
  food: 'M-6 -11H-5V-5H-4V-11H-3V-5H-2V-11H-1V-3L-3 0V11H-5V0L-6 -3ZM6 -11Q3 -9 3 0H5V11H7V-11Z',
};

const pois: { kind: keyof typeof symbols; x: number; y: number }[] = [
  { kind: 'bus', x: 131, y: 109 },
  { kind: 'bus', x: 390, y: 344 },
  { kind: 'bus', x: 926, y: 136 },
  { kind: 'bus', x: 1153, y: 772 },
  { kind: 'food', x: 261, y: 204 },
  { kind: 'bed', x: 521, y: 577 },
  { kind: 'school', x: 671, y: 640 },
  { kind: 'school', x: 1020, y: 471 },
  { kind: 'cart', x: 229, y: 694 },
  { kind: 'cart', x: 1006, y: 689 },
];

const mapText = "font-['Noto_Sans',sans-serif]";

function AreaMap() {
  return (
    <svg viewBox="0 0 1195 784" preserveAspectRatio="xMidYMid slice" className="block h-full w-full bg-[#f7f7f7]">
      {tiles.map((tile) => (
        <g key={tile.id} transform={tile.transform}>
          <path d={tile.grey} fill="#dfdfdf" />
          <path d={tile.green} fill="#9fd3c1" />
          <path d={tile.water} fill="#c4e3e0" />
          {tile.light && <path d={tile.light} fill="#f7f7f7" />}
          {tile.id === 'se' && (
            <path d="M840 150L1335 100L1355 320L1100 370L840 360Z" fill="#fff" />
          )}
        </g>
      ))}
      {/* Orchard */}
      <path
        d="M176 288L200 312M164 296L204 338M152 306L196 350M142 316L180 346M134 326L166 340M206 346L222 358"
        stroke="#dfe8e4"
        strokeWidth="3"
        strokeDasharray="2 7"
        fill="none"
      />
      <Lines kind="rail" color="#d5d6da" width={4} />
      <Lines kind="minor" color="#e9e9e9" width={7} />
      <Lines kind="mid" color="#e6e6e6" width={9} />
      <Lines kind="major" color="#e4e4e4" width={12} />
      {tiles.map((tile) => (
        <g key={tile.id} transform={tile.transform} fill="#dcdcdc">
          {tile.houses.map((row, i) => <HouseRow key={i} row={row} />)}
        </g>
      ))}
      <Lines kind="minor" color="#fff" width={5} />
      <Lines kind="mid" color="#fff" width={7} />
      <Lines kind="major" color="#fff" width={10} />
      <Lines kind="river" color="#fff" width={7} />
      <Lines kind="river" color="#84cede" width={3} />
      <Lines kind="stream" color="#8ccfe4" width={2} />

      {/* Street names */}
      <path id="street-mesiker" d="M844 26C850 80 848 140 858 210" fill="none" />
      <path id="street-rumliker-north" d="M952 76L1016 -54" fill="none" />
      <path id="street-rumliker" d="M862 543L899 340" fill="none" />
      <g className={`${mapText} text-[24px]`} fill="#7c5b4d" stroke="#fff" strokeWidth="2" paintOrder="stroke">
        <text><textPath href="#street-mesiker">Mesikerstrasse</textPath></text>
        <text><textPath href="#street-rumliker-north">Rumlikerstrasse</textPath></text>
        <text><textPath href="#street-rumliker">Rumlikerstrasse</textPath></text>
      </g>
      <text
        x="1059 1090 1101 1111 1129 1149 1169 1186"
        y="61 60 65 73 83 91 95 98"
        rotate="8 14 20 25 23 17 12 12"
        fill="#00608f"
        className={`${mapText} text-[28px]`}
      >
        Wildbach
      </text>

      {pois.map((poi) => (
        <path
          key={`${poi.x}-${poi.y}`}
          d={symbols[poi.kind]}
          transform={`translate(${poi.x} ${poi.y})`}
          fill="#3c3c3c"
          fillRule="evenodd"
          stroke="#fff"
          strokeWidth="2"
          paintOrder="stroke"
        />
      ))}
      <g className={`${mapText} text-[22px]`} fill="#6e6e6e" stroke="#fff" strokeWidth="4" strokeLinejoin="round" paintOrder="stroke">
        {places.map((place) => (
          <text key={`${place.x}-${place.y}`} x={place.x} y={place.y} textAnchor="middle">{place.text}</text>
        ))}
      </g>
      <text
        x="842"
        y="651"
        textAnchor="middle"
        fill="#262626"
        stroke="#fff"
        strokeWidth="4"
        strokeLinejoin="round"
        paintOrder="stroke"
        className={`${mapText} text-[35px]`}
      >
        Fehraltorf
      </text>
      {shields.map((shield) => (
        <g key={`${shield.x}-${shield.y}`}>
          <rect x={shield.x} y={shield.y} width="49" height="27" rx="2" fill="#fff" stroke="#555" strokeWidth="2" />
          <text x={shield.x + 24} y={shield.y + 21} textAnchor="middle" fill="#333" className={`${mapText} text-[20px]`}>
            {shield.text}
          </text>
        </g>
      ))}

      {/* Grid overlay */}
      <path
        d="M297 175V212M320 164L849 783M1120 575L1078 566L1044 607L1135 790"
        fill="none"
        stroke="#8a8a8a"
        strokeWidth="4"
      />
      <g fill="#2f2f2f" fillOpacity="0.720">
        <rect x="269" y="204" width="57" height="12" />
        <rect x="269" y="210" width="57" height="12" />
        <rect x="1050" y="559" width="57" height="12" />
        <rect x="1083" y="567" width="58" height="12" />
        <rect x="1084" y="571" width="58" height="12" />
        <rect x="1011" y="598" width="58" height="11" />
        <rect x="1011" y="607" width="58" height="11" />
      </g>
      <rect x="270" y="135" width="9" height="20" fill="#77724f" />
      <circle cx="302" cy="153" r="25" fill="#fed800" stroke="#0091d8" strokeWidth="4" />
      <circle cx="308" cy="147" r="24" fill="#fed800" stroke="#0091d8" strokeWidth="6" />
      <path d="M293 122C279 122 270 132 270 146C270 158 279 168 292 170L302 150L284 142Q288 128 300 123Z" fill="#fcd72c" />
      <circle cx="301" cy="151" r="20" fill="#fed800" />
      <path d="M290 166Q306 172 320 158Q316 173 304 174Q294 173 290 166Z" fill="#dcd22c" />
      <path d="M284 155L300 140M288 160L306 143M296 162L312 147" stroke="#fff" strokeWidth="3" />
      <path d="M292 135H318V151L310 156L300 146Z" fill="#fff" />

      <path d="M-2 28L24 48Q36 60 28 71Q24 78 17 78L-2 66Z" fill="#fff" stroke="#8e8e8e" strokeWidth="2" />
    </svg>
  );
}

/* ---------- page ---------- */

export default function App() {
  return (
    <div className="grid h-screen grid-cols-[1241fr_28px_1195fr] overflow-hidden bg-[#f3f3f3]">
      <section className="relative flex min-h-0 min-w-0 flex-col">
        <div className="flex min-h-0 flex-1">
          <div className="min-w-0 flex-1 overflow-hidden bg-[#f5f5f5]">
            <Toolbar
              id="quantity-power"
              title="Scheinleist..."
              className="h-[85px] border-t-2 border-[#d9d9d9] pl-3"
              titleClassName="w-[370px]"
            />
            <div className="relative mr-5 ml-3 bg-white">
              <PowerChart />
              <MenuButton />
            </div>
            <Toolbar
              id="quantity-voltage"
              title="Spannung"
              className="h-24 pt-3 pl-[22px]"
              titleClassName="w-[349px]"
            />
            <div className="relative mr-5 ml-3 bg-white">
              <VoltageChart />
              <MenuButton />
            </div>
          </div>
          <div className="flex w-[34px] flex-col items-center border-t-2 border-[#d9d9d9] bg-[#eeeeee] py-3">
            <span className="h-0 w-0 border-x-8 border-b-8 border-x-transparent border-b-[#444]" />
            <div className="flex w-[29px] flex-1 flex-col py-2">
              <div className="flex-[208]" />
              <div className="flex-[625] bg-[#b8b8b8]" />
              <div className="flex-[438]" />
            </div>
            <span className="h-0 w-0 border-x-8 border-t-8 border-x-transparent border-t-[#444]" />
          </div>
        </div>
        <div className="pt-5 pr-[21px] pl-3">
          <div className="bg-white">
            <AlarmChart />
          </div>
        </div>
        <div className="pointer-events-none absolute inset-y-0 left-0 w-10 bg-linear-to-r from-[#8c9696]/50 via-[#8c9696]/15 to-transparent" />
      </section>

      <div className="relative border-x-2 border-[#d2d2d2] bg-[#ebebeb]">
        <button aria-label="Diagramme einklappen" className="absolute top-[325px] left-0 text-[#222]">
          <ChevronLeft className="h-7 w-6" />
        </button>
        <button aria-label="Karte einklappen" className="absolute top-[1205px] left-0 text-[#222]">
          <ChevronRight className="h-7 w-6" />
        </button>
      </div>

      <section className="flex min-h-0 min-w-0 flex-col bg-white">
        <NetworkDiagram />
        <div className="min-h-0 flex-1">
          <AreaMap />
        </div>
      </section>
    </div>
  );
}
